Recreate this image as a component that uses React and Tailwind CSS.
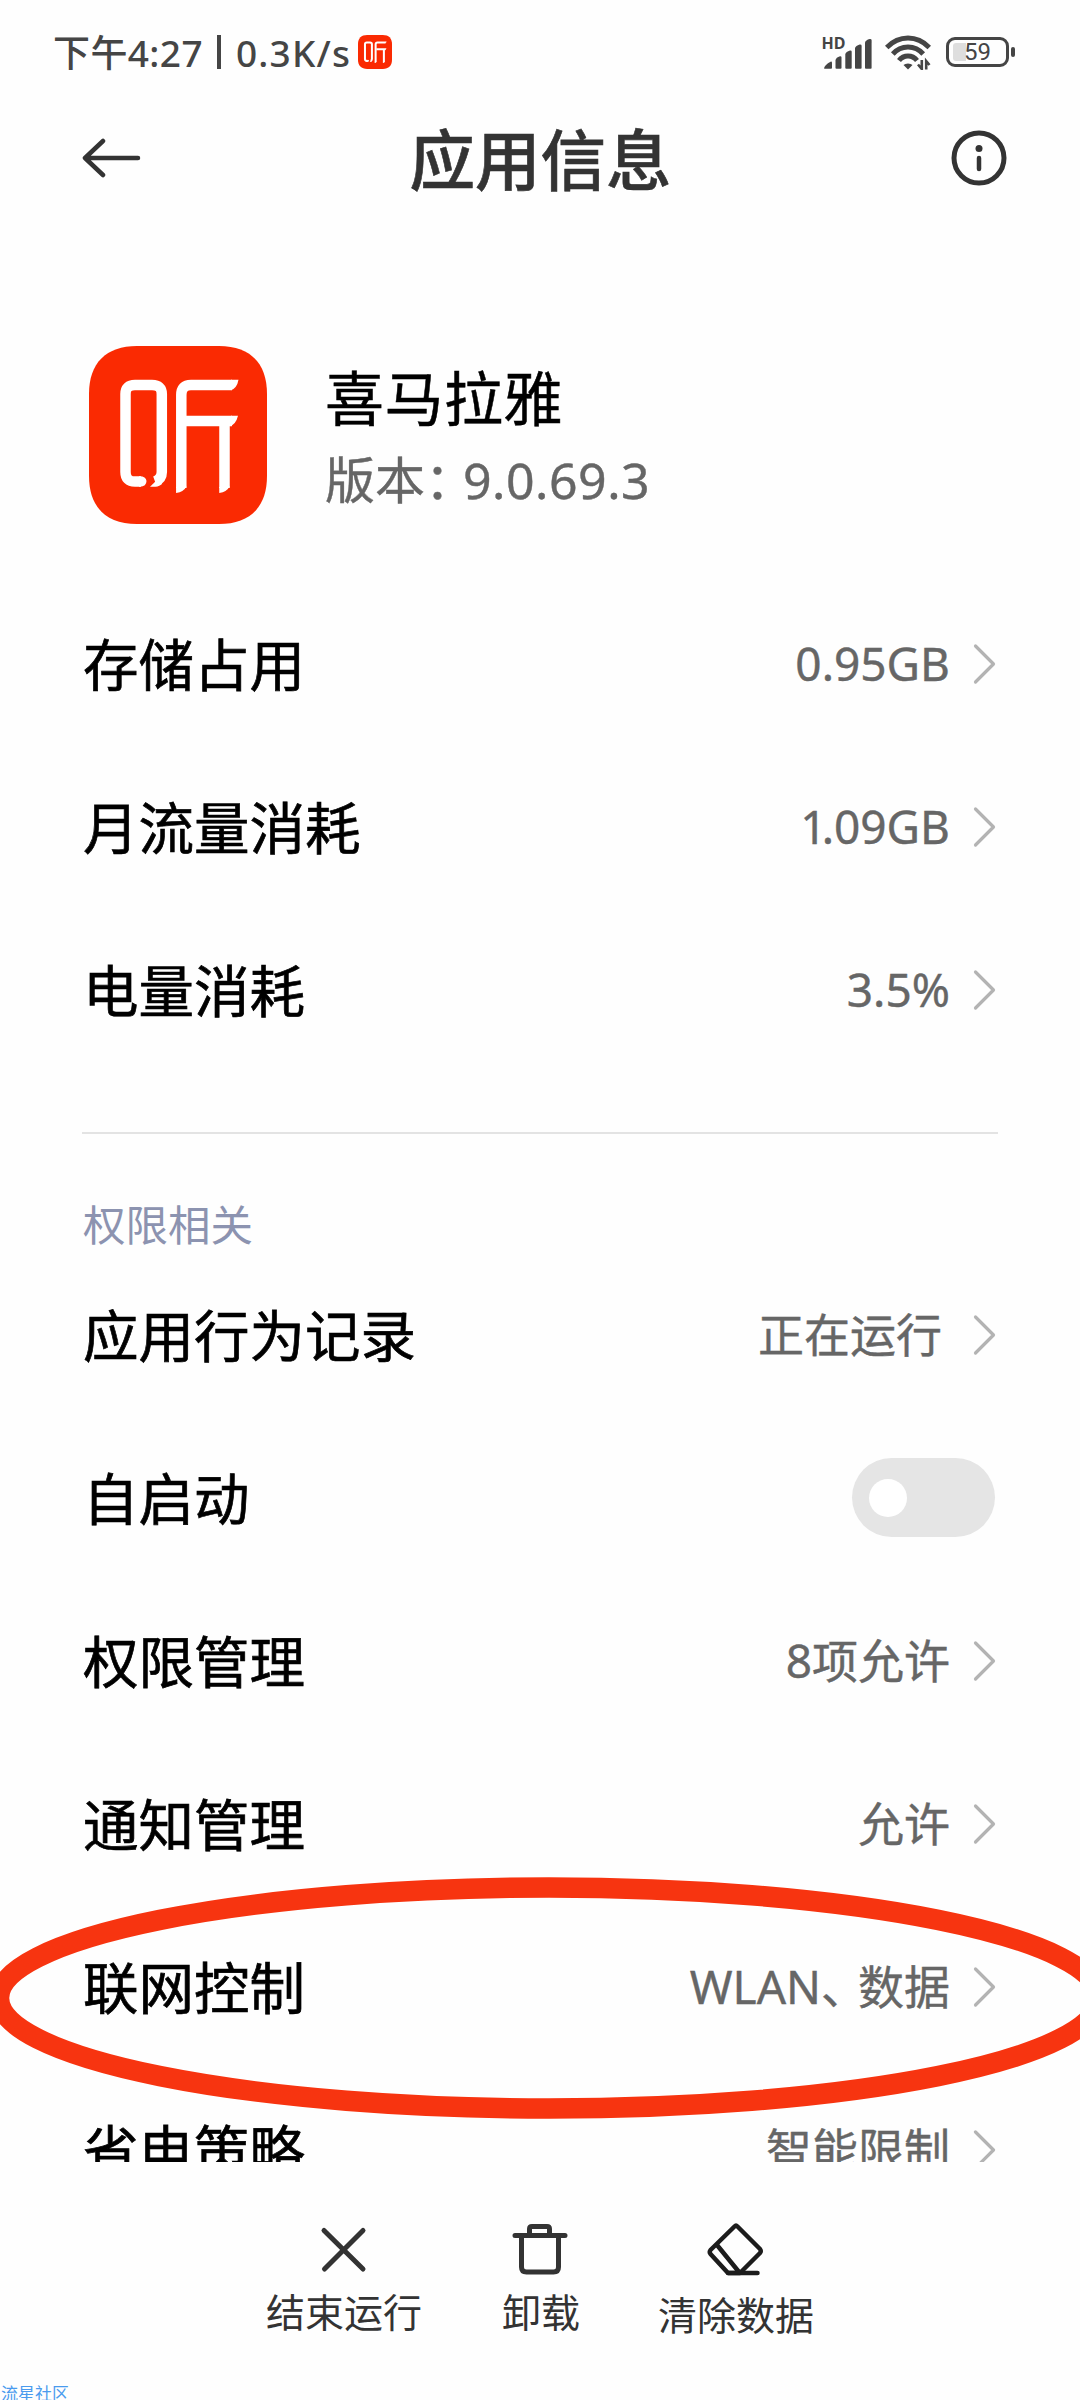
const usageRows = [
  { label: '存储占用', value: '0.95GB' },
  { label: '月流量消耗', value: <><span className="tracking-[-5px]">1</span>.09GB</> },
  { label: '电量消耗', value: '3.5%' },
];

const permissionRows = [
  { label: '应用行为记录', value: <span className="pr-2">正在运行</span> },
  { label: '自启动', toggle: true },
  { label: '权限管理', value: '8项允许' },
  { label: '通知管理', value: '允许' },
  { label: '联网控制', value: <>WLAN<span className="tracking-[-9px]">、</span>数据</> },
  { label: '省电策略', value: '智能限制' },
];

function AppLogo({ className }) {
  return (
    <svg viewBox="0 0 178 178" className={className} fill="none">
      <path
        d="M48 0H130C161 0 178 17 178 48V130C178 161 161 178 130 178H48C17 178 0 161 0 130V48C0 17 17 0 48 0Z"
        fill="#fa2a02"
      />
      <g stroke="#fff" strokeWidth="10.5">
        <path d="M52 135.5H46Q36.500 135.500 36.500 126V48Q36.500 39 46 39H63Q72.800 39 72.800 48V126Q72.800 133 66 135.500" />
        <path d="M92.300 142V49Q92.300 39 102 39H143" />
        <path d="M96 75H143M135.500 77V142" />
      </g>
      <g fill="#fff">
        <path d="M50 130.200Q57 130 57.500 135Q57.500 141 50 140.700Z" />
        <path d="M70 132L61 140.700Q69 141.500 73 138Z" />
        <path d="M87.050 141V147Q95 146 97.500 140Z" />
        <path d="M130.250 141V147Q138 146 140.750 140Z" />
        <path d="M142 33.750H149.500Q148 42 142 44.250Z" />
        <path d="M142 69.750H149Q147 78 141 80.250Z" />
      </g>
    </svg>
  );
}

function SignalIcon() {
  return (
    <svg viewBox="0 0 50 36" className="w-[50px] h-9 overflow-visible" fill="#454545">
      <text x="-0.5" y="15" fontSize="15.500" fontWeight="700" fontFamily="Noto Sans, sans-serif" textLength="24" lengthAdjust="spacingAndGlyphs">HD</text>
      <path d="M2 35Q2 31 9 27.500Q10 27 10 29V34Q10 34.700 9 34.700H3Q2 34.700 2 34Z" />
      <path d="M13.500 26Q14 23.500 18 22.200Q19.500 22 19.500 23.500V34Q19.500 34.700 18.500 34.700H14.500Q13.500 34.700 13.500 34Z" />
      <path d="M23.300 20Q24 17.500 28 16.400Q29.700 16.200 29.700 17.700V34Q29.700 34.700 28.700 34.700H24.300Q23.300 34.700 23.300 34Z" />
      <path d="M33 14Q33.700 11.500 37.700 10.400Q39.600 10.200 39.600 11.700V34Q39.600 34.700 38.600 34.700H34Q33 34.700 33 34Z" />
      <path d="M43 8.500Q43.700 6 47.700 5Q49.600 4.800 49.600 6.300V34Q49.600 34.700 48.600 34.700H44Q43 34.700 43 34Z" />
    </svg>
  );
}

function WifiIcon() {
  return (
    <svg viewBox="0 0 46 35" className="w-[46px] h-[35px]" fill="none" stroke="#454545" strokeWidth="5">
      <path d="M1.700 12.500Q11 3 23 3Q35 3 44.300 12.500" />
      <path d="M7.800 19Q14 12 23 12Q32 12 38.200 19" />
      <path d="M14 25.500Q17.500 21 23 21Q28.500 21 32 25.500" />
      <path d="M23 28.500Q26 28.500 27.500 30L23 34.500L18.500 30Q20 28.500 23 28.500Z" fill="#454545" stroke="none" />
      <path d="M36.800 25V34L33 29.500M41.200 34.500V26L44.500 30" strokeWidth="2.600" />
    </svg>
  );
}

function Battery() {
  return (
    <div className="flex items-center gap-0.5">
      <div className="relative flex items-center justify-center w-[63px] h-[30px] rounded-[9px] border-[3px] border-[#454545]">
        <div className="absolute left-1 top-[3px] w-[13px] h-[18px] rounded-l-[3px] bg-[#dedede]" />
        <span className="relative font-[Roboto,sans-serif] text-[24px] leading-none text-[#454545]">59</span>
      </div>
      <div className="w-1 h-2.5 rounded-[2px] bg-[#454545]" />
    </div>
  );
}

function StatusBar() {
  return (
    <div className="flex items-start justify-between h-[104px] pl-[53px] pr-[65px] text-[#454545]">
      <div className="flex items-center h-[104px]">
        <span className="text-[37px] leading-none font-medium tracking-[0.4px]">下午4:27</span>
        <span className="w-1 h-[34px] ml-[14px] mr-[15px] bg-[#454545]" />
        <span className="text-[37px] leading-none font-medium tracking-[1.2px]">0.3K/s</span>
        <AppLogo className="w-[34px] h-[34px] ml-[7px]" />
      </div>
      <div className="flex items-center h-[104px]">
        <SignalIcon />
        <div className="w-[13px]" />
        <WifiIcon />
        <div className="w-[15px]" />
        <Battery />
      </div>
    </div>
  );
}

function Header() {
  return (
    <div className="flex items-center justify-between h-[108px] pl-[82px] pr-[73px]">
      <svg viewBox="0 0 60 44" className="w-[60px] h-11" fill="none" stroke="#333" strokeWidth="4.500" strokeLinecap="round" strokeLinejoin="round">
        <path d="M21 5L3 22L21 39M3 22H56" />
      </svg>
      <h1 className="mt-1 mr-3 text-[65.500px] leading-none font-medium text-[#333] [-webkit-text-stroke:0.6px]">应用信息</h1>
      <svg viewBox="0 0 56 56" className="w-14 h-14" fill="none" stroke="#333">
        <circle cx="28" cy="28" r="25" strokeWidth="5" />
        <circle cx="28" cy="18.500" r="3.500" fill="#333" stroke="none" />
        <path d="M28 28V39" strokeWidth="4.500" strokeLinecap="round" />
      </svg>
    </div>
  );
}

function Row({ label, value, toggle }) {
  return (
    <div className="flex items-center justify-between h-[163px] shrink-0 pl-[83px] pr-[84px]">
      <span className="text-[55.500px] leading-none text-black [-webkit-text-stroke:0.7px]">{label}</span>
      {toggle ? (
        <div className="flex items-center w-[143px] h-[79px] mb-0.5 mr-px pl-[17px] rounded-full bg-[#e5e5e5]">
          <div className="w-[38px] h-[38px] rounded-full bg-white" />
        </div>
      ) : (
        <div className="flex items-center gap-[23px] mb-0.5">
          <span className="mb-0.5 text-[46px] leading-none text-[#666] [-webkit-text-stroke:0.4px]">{value}</span>
          <svg viewBox="0 0 23 42" className="w-[23px] h-[42px]" fill="none" stroke="#b3b3b3" strokeWidth="3.200" strokeLinecap="round" strokeLinejoin="round">
            <path d="M2.500 3L20.500 21L2.500 39" />
          </svg>
        </div>
      )}
    </div>
  );
}

function BottomBar() {
  return (
    <div className="flex items-start pt-[58px] pl-[266px] text-[39px] leading-none text-[#333]">
      <div className="flex flex-col items-center w-[156px]">
        <svg viewBox="0 0 60 56" className="w-[60px] h-14" fill="none" stroke="#333" strokeWidth="5" strokeLinecap="round">
          <path d="M10 10.500L49 49M49 10.500L10.500 49" />
        </svg>
        <span className="mt-4">结束运行</span>
      </div>
      <div className="flex flex-col items-center w-[78px] ml-20">
        <svg viewBox="0 0 60 56" className="w-[60px] h-14 mr-[3px]" fill="none" stroke="#333" strokeWidth="5" strokeLinecap="round" strokeLinejoin="round">
          <path d="M5 15.500H55M19.500 15V9Q19.500 6.500 22 6.500H37Q39.500 6.500 39.500 9V15" />
          <path d="M11.500 16V47Q11.500 52 16.500 52H43.500Q48.500 52 48.500 47V16" />
        </svg>
        <span className="mt-4">卸载</span>
      </div>
      <div className="flex flex-col items-center w-[156px] ml-[78px]">
        <svg viewBox="0 0 60 56" className="w-[60px] h-14" fill="none" stroke="#1c1c1c" strokeWidth="4.500" strokeLinecap="round" strokeLinejoin="round">
          <path d="M28.500 6.500Q30 5 31.500 6.500L54 29Q55.500 31 54 33L34 53H22L4.500 34Q3 32 4.500 30Z" />
          <path d="M11 25L33 52M22 53H51.500" />
        </svg>
        <span className="mt-[19px]">清除数据</span>
      </div>
    </div>
  );
}

export default function App() {
  return (
    <div className="relative flex flex-col w-[1080px] h-[2400px] overflow-hidden bg-[#fefefe] font-['Noto_Sans','Noto_Sans_CJK_SC',sans-serif]" lang="zh-CN">
      <StatusBar />
      <Header />

      {/* Scrolling content, cut off above the bottom bar */}
      <div className="flex flex-col h-[1950px] overflow-hidden">
        <div className="flex items-center h-[178px] shrink-0 mt-[134px] mb-[59px] pl-[89px]">
          <AppLogo className="w-[178px] h-[178px]" />
          <div className="flex flex-col gap-[27px] mt-[3px] ml-[58px]">
            <span className="text-[59px] leading-none tracking-[0.5px] text-black [-webkit-text-stroke:0.5px]">喜马拉雅</span>
            <span className="text-[50px] leading-none text-[#666] [-webkit-text-stroke:0.4px]">
              版本<span className="tracking-[-12px]">：</span><span className="tracking-[0.5px]">9.0.69.3</span>
            </span>
          </div>
        </div>

        {usageRows.map((row) => (
          <Row key={row.label} {...row} />
        ))}

        <div className="h-0.5 shrink-0 mt-[60px] mx-[82px] bg-[#e3e3e3]" />
        <div className="flex items-center h-[42px] shrink-0 mt-[70px] mb-2 pl-[83px] text-[42.500px] leading-none text-[#8c93b0]">
          权限相关
        </div>

        {permissionRows.map((row) => (
          <Row key={row.label} {...row} />
        ))}
      </div>

      <BottomBar />

      {/* Hand-drawn highlight around the network row */}
      <svg viewBox="0 0 1080 260" className="absolute left-0 top-[1868px] w-[1080px] h-[260px]" fill="none">
        <ellipse cx="549" cy="130" rx="550" ry="110.500" stroke="#f73410" strokeWidth="20.500" />
      </svg>
      <span className="absolute left-px bottom-[-2px] text-[17px] leading-none text-[#4a9bee]">流星社区</span>
    </div>
  );
}
